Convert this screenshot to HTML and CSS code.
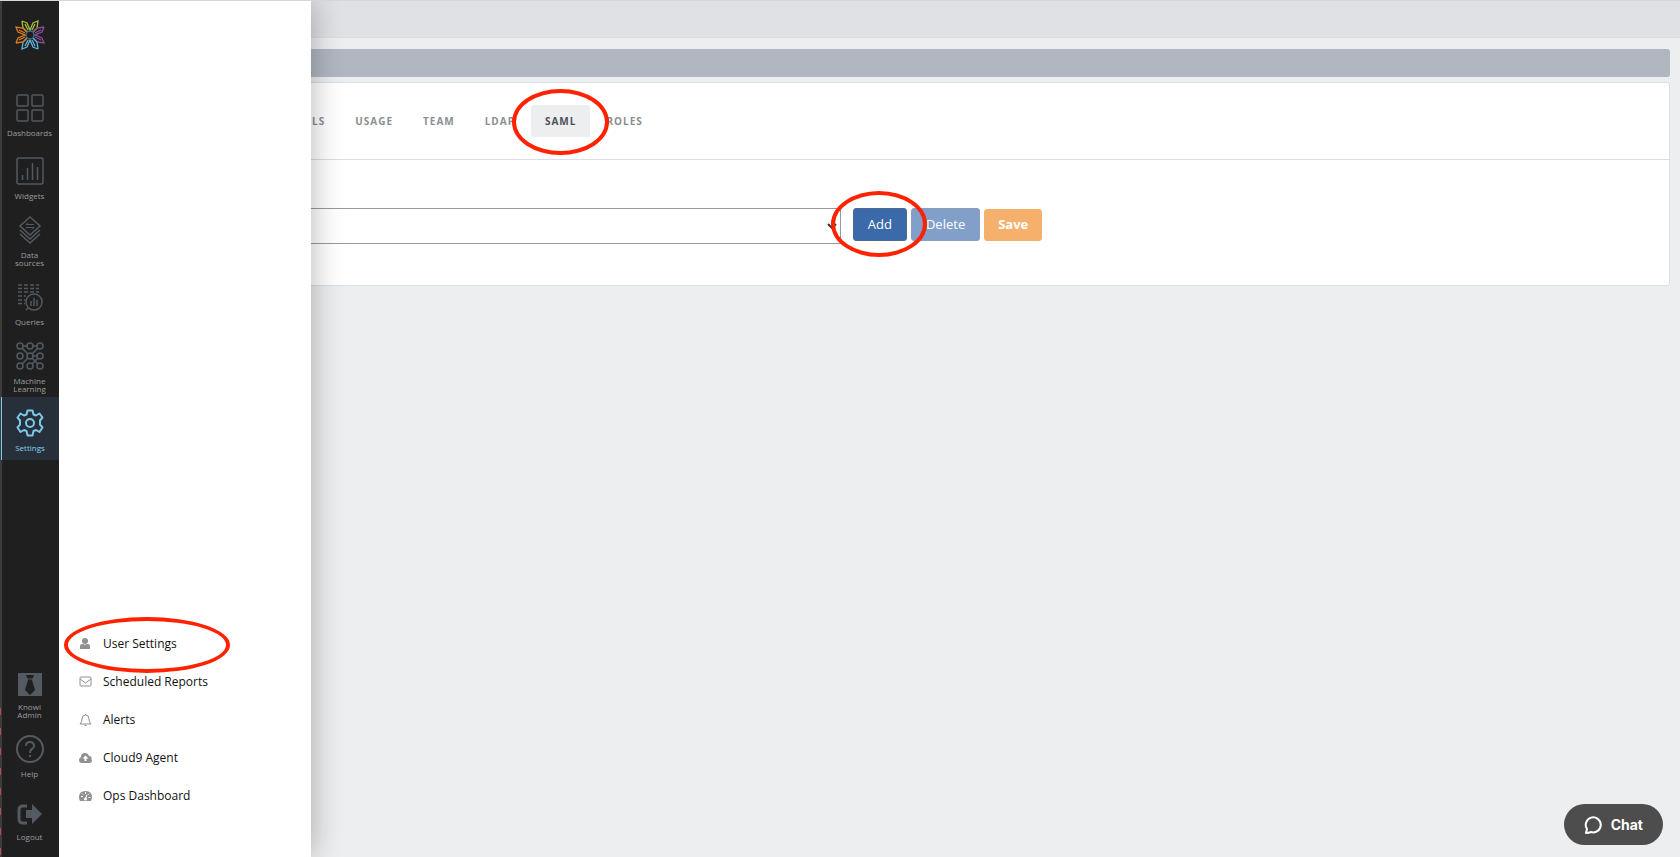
FILE: index.html
```
<!DOCTYPE html>
<html lang="en">
<head>
    <meta charset="UTF-8">
    <meta name="viewport" content="width=device-width, initial-scale=1.0">
    <title>Settings - SAML</title>
    <link rel="stylesheet" href="styles.css">
</head>
<body>
    <nav class="sidebar">
        <a href="#" class="logo" aria-label="Home">
            <svg viewBox="0 0 30 30" width="30" height="30" fill="none" stroke-width="1.3">
                <defs><path id="petals" d="M7 1l5 2 3 7 3-7 5-2-1 7-4 4M7 1l1 7 4 4M10 4l3 6M20 4l-3 6"/></defs>
                <use href="#petals" stroke="#a6bf3f"/>
                <use href="#petals" stroke="#8a4f9c" transform="rotate(90 15 15)"/>
                <use href="#petals" stroke="#5fb4dc" transform="rotate(180 15 15)"/>
                <use href="#petals" stroke="#e07d1e" transform="rotate(270 15 15)"/>
                <circle cx="15" cy="15" r="4" stroke="#3d7186"/>
            </svg>
        </a>

        <a href="#" class="nav-item spaced">
            <svg viewBox="0 0 28 28"><rect x="1" y="1" width="11" height="11" rx="1"/><rect x="16" y="1" width="11" height="11" rx="1"/><rect x="1" y="16" width="11" height="11" rx="1"/><rect x="16" y="16" width="11" height="11" rx="1"/></svg>
            <span>Dashboards</span>
        </a>
        <a href="#" class="nav-item">
            <svg viewBox="0 0 28 28"><rect x="1" y="1" width="26" height="26" rx="2"/><path d="M6.500 18v5M11.500 11v12M16.500 6v17M21.500 10v13"/></svg>
            <span>Widgets</span>
        </a>
        <a href="#" class="nav-item">
            <svg viewBox="0 0 28 28"><path d="M14 1l10 9-10 9-10-9zM4 14l10 9 10-9M4 18l10 9 10-9"/><path d="M18 8.500h-8l2-2M10 11.500h8l-2 2" stroke-width="1"/></svg>
            <span>Data<br>sources</span>
        </a>
        <a href="#" class="nav-item">
            <svg viewBox="0 0 28 28"><path d="M2 2h21M2 5.500h21M2 9h21M2 13h8M2 17h7M2 20.500h7" stroke-dasharray="4 2"/><circle cx="18" cy="19" r="8"/><path d="M12 25l-2 2M15 18v5M18 15v8M21 17v6"/></svg>
            <span>Queries</span>
        </a>
        <a href="#" class="nav-item">
            <svg viewBox="0 0 28 28"><circle cx="4" cy="4" r="3"/><circle cx="14" cy="4" r="3"/><circle cx="24" cy="4" r="3"/><circle cx="4" cy="14" r="3"/><circle cx="14" cy="14" r="3"/><circle cx="24" cy="14" r="3"/><circle cx="4" cy="24" r="3"/><circle cx="14" cy="24" r="3"/><circle cx="24" cy="24" r="3"/><path d="M7 4h4M17 4h4M22 6l-6 6M17 14h4M12 16l-6 6M16 16l6 6M22 16l-6 6M6 6l6 6"/></svg>
            <span>Machine<br>Learning</span>
        </a>
        <a href="#" class="nav-item active">
            <svg viewBox="0 0 28 28"><path d="M11.500 1.500h5l1 4 2.500 1 3.500-2 3 4-2.500 3v4l2.500 3-3 4.500-3.500-2-2.500 1-1 4.500h-5l-1-4.500-2.500-1-3.500 2-3-4.500 2.500-3v-4l-2.500-3 3-4 3.500 2 2.500-1z" stroke-width="2" stroke-linejoin="round"/><circle cx="14" cy="14" r="4" stroke-width="2"/></svg>
            <span>Settings</span>
        </a>

        <div class="nav-bottom">
            <a href="#" class="nav-item">
                <svg viewBox="0 0 28 28"><path class="solid" d="M2 5h24v23H2z"/><path class="tie" d="M10 7h8l-2 5 3 10-5 5-5-5 3-10z"/><path d="M11 11h6" stroke-width="1"/></svg>
                <span>Knowi<br>Admin</span>
            </a>
            <a href="#" class="nav-item spaced">
                <svg viewBox="0 0 28 28"><circle cx="14" cy="14" r="13" stroke-width="2"/><path d="M10 11q0-4 4-4t4 4q0 2-2 3t-2 4M14 20v2" stroke-width="2"/></svg>
                <span>Help</span>
            </a>
            <a href="#" class="nav-item">
                <svg viewBox="0 0 28 28"><path d="M11 8H7q-4 0-4 4v9q0 4 4 4h4" stroke-width="3"/><path class="solid" d="M10 12h6V6l10 10-10 10v-6h-6z"/></svg>
                <span>Logout</span>
            </a>
        </div>
    </nav>

    <main class="main">
        <header class="topbar"></header>
        <div class="titlebar"></div>

        <section class="card">
            <div class="tabs">
                <a href="#" class="tab">LS</a>
                <a href="#" class="tab">USAGE</a>
                <a href="#" class="tab">TEAM</a>
                <a href="#" class="tab">LDAP</a>
                <a href="#" class="tab selected marked">SAML</a>
                <a href="#" class="tab">ROLES</a>
            </div>
            <form class="saml-form">
                <div class="select-box">
                    <select aria-label="SAML configuration"></select>
                    <svg viewBox="0 0 10 6" width="10" height="6"><path d="M1 1l4 4 4-4" fill="none" stroke="#333" stroke-width="2"/></svg>
                </div>
                <button type="button" class="btn marked">Add</button>
                <button type="button" class="btn delete">Delete</button>
                <button type="submit" class="btn save">Save</button>
            </form>
        </section>

        <aside class="menu">
            <a href="#" class="menu-item marked">
                <svg viewBox="0 0 14 14"><circle cx="6" cy="4" r="3"/><path d="M1 12V9q0-2 2-2h1q2 1 4 0h1q2 0 2 2v3z"/></svg>
                User Settings
            </a>
            <a href="#" class="menu-item">
                <svg viewBox="0 0 14 14" class="line"><rect x="1" y="2" width="11" height="9" rx="1"/><path d="M1 4l5.500 4L12 4"/></svg>
                Scheduled Reports
            </a>
            <a href="#" class="menu-item">
                <svg viewBox="0 0 14 14" class="line"><path d="M1 11q2-2 2-5 0-4 3.500-4T10 6q0 3 2 5zM5.500 12.500h2M6.500 1v1"/></svg>
                Alerts
            </a>
            <a href="#" class="menu-item">
                <svg viewBox="0 0 14 14"><path d="M3 12q-3 0-3-3 0-2 2-3 0-4 4-4 3 0 4 3 3 0 2.500 3Q14 12 10 12z"/><path d="M6.500 4.500l3 3H7.500V10h-2V7.500h-2z" fill="#fff"/></svg>
                Cloud9 Agent
            </a>
            <a href="#" class="menu-item">
                <svg viewBox="0 0 14 14"><path d="M1 12q-1-2-1-4 0-6 6.500-6T13 8q0 2-1 4z"/><path d="M2 7.500h2M3 4.500l1 1M6.500 3v2M9.500 5.500l1-1M9.500 8.500h2M6.500 10L8 5.500" stroke="#fff" fill="none"/><circle cx="6.500" cy="10" r="1.500" fill="#fff"/></svg>
                Ops Dashboard
            </a>
        </aside>
    </main>

    <button type="button" class="chat">
        <svg viewBox="0 0 20 20" width="20" height="20"><path d="M2 18l1-4a7.500 7.500 0 1 1 4 3q-2 1-5 1z" fill="none" stroke="#fff" stroke-width="2" stroke-linejoin="round"/></svg>
        Chat
    </button>
</body>
</html>
```
FILE: styles.css
```
* {
    box-sizing: border-box;
}

body {
    margin: 0;
    min-height: 100vh;
    display: flex;
    background-color: #edeef0;
    border-top: 1px solid #d5d6dc;
    font-family: "Open Sans", sans-serif;
}

a {
    text-decoration: none;
}

button {
    font-family: inherit;
    cursor: pointer;
}

/* left navigation */
.sidebar {
    position: relative;
    width: 59px;
    flex-shrink: 0;
    display: flex;
    flex-direction: column;
    background-color: #1f1f1f;
    box-shadow: inset 2px 0 #3c3c3c;
}

/* red ticks on the window edge */
.sidebar::before {
    content: "";
    position: absolute;
    left: 0;
    bottom: 0;
    width: 1px;
    height: 149px;
    background: repeating-linear-gradient(#b94a4a 0 7px, #3c3c3c 7px 20px);
}

.logo {
    height: 81px;
    padding-top: 19px;
    text-align: center;
}

.nav-item {
    display: flex;
    flex-direction: column;
    align-items: center;
    gap: 7px;
    padding: 12px 0 4px;
    color: #999da1;
    font-size: 8px;
    line-height: 8px;
    text-align: center;
}

.nav-item svg {
    width: 28px;
    height: 28px;
    fill: none;
    stroke: #535a61;
    stroke-width: 1.5;
}

.nav-item .solid {
    fill: #535a61;
    stroke: none;
}

.nav-item .tie {
    fill: #1f1f1f;
    stroke: none;
}

.nav-item.spaced {
    padding-bottom: 8px;
}

.nav-item.active {
    margin-left: 1px;
    padding: 12px 1px 8px 0;
    background-color: #27303a;
    border-left: 1px solid #7cc8ea;
    color: #84d0f2;
}

.nav-item.active svg {
    stroke: #7cc8ea;
}

.nav-bottom {
    margin-top: auto;
    padding-bottom: 12px;
}

/* page content */
.main {
    position: relative;
    flex: 1;
}

.topbar {
    height: 37px;
    background-color: #e0e1e5;
    border-bottom: 1px solid #dcdde3;
}

.titlebar {
    height: 28px;
    margin: 11px 10px 5px;
    background-color: #b0b7c1;
    border-radius: 3px;
}

.card {
    margin: 0 10px;
    background-color: #fff;
    border: 1px solid #d9dfe5;
    border-radius: 3px;
}

.tabs {
    display: flex;
    gap: 2px;
    padding: 22px 0 22px 228px;
    border-bottom: 1px solid #dadde6;
}

.tab {
    padding: 0 14px;
    border-radius: 3px;
    color: #8b8e93;
    font-size: 10px;
    font-weight: 700;
    line-height: 32px;
    letter-spacing: 1px;
}

.tab.selected {
    background-color: #edeef0;
    color: #4c5058;
}

.saml-form {
    display: flex;
    align-items: flex-start;
    gap: 4px;
    padding: 48px 4px 41px 10px;
}

.select-box {
    position: relative;
    width: 48%;
    margin-right: 8px;
}

.select-box select {
    display: block;
    width: 100%;
    height: 36px;
    appearance: none;
    background-color: #fff;
    border: 1px solid #999;
    border-radius: 0;
}

.select-box svg {
    position: absolute;
    right: 4px;
    top: 15px;
}

.btn {
    height: 33px;
    padding: 0 14px 2px;
    background-color: #3a6aa9;
    border: 1px solid #4f6a8c;
    border-radius: 3px;
    color: #fff;
    font-size: 13px;
}

.btn.delete {
    background-color: #819fc9;
    border-color: #8c9fba;
}

.btn.save {
    height: 32px;
    margin-top: 1px;
    padding: 0 13px 2px;
    background-color: #f5b06c;
    border-color: #f5b06c;
    font-weight: 700;
}

/* settings flyout */
.menu {
    position: absolute;
    top: 0;
    bottom: 0;
    left: 0;
    width: 252px;
    display: flex;
    flex-direction: column;
    justify-content: flex-end;
    align-items: flex-start;
    padding: 0 0 42px 20px;
    background-color: #fff;
    box-shadow: 0 0 30px rgba(0, 0, 0, 0.3);
    clip-path: inset(0 -40px 0 0);
}

.menu-item {
    display: flex;
    align-items: center;
    gap: 10px;
    color: #111;
    font-size: 12px;
    line-height: 38px;
}

.menu-item svg {
    width: 14px;
    height: 14px;
    fill: #909090;
}

.menu-item svg.line {
    fill: none;
    stroke: #909090;
}

/* red rings around the items to click */
.marked {
    position: relative;
}

.marked::after {
    content: "";
    position: absolute;
    z-index: 1;
    border: 4px solid #ff2200;
    border-radius: 50%;
    pointer-events: none;
}

.tab.marked::after {
    inset: -16px -19px -18px;
}

.btn.marked::after {
    inset: -18px -21px -17px -23px;
}

.menu-item.marked::after {
    inset: -8px -53px -10px -15px;
}

.chat {
    position: fixed;
    right: 17px;
    bottom: 12px;
    display: flex;
    align-items: center;
    gap: 7px;
    height: 41px;
    padding: 0 20px;
    background-color: #4d4d4d;
    border: none;
    border-radius: 21px;
    color: #fff;
    font-family: Inter, sans-serif;
    font-size: 14px;
    font-weight: 700;
}
```
